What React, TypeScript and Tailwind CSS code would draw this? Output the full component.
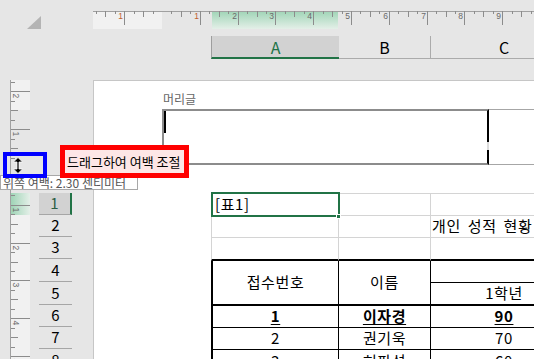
import React from 'react';

const KR = "font-['Noto_Sans_CJK_KR','Noto_Sans',sans-serif]";
const CM = 37.8;

function TopRuler() {
  const w = 441;
  const o = 69;
  const ticks: React.ReactNode[] = [];
  for (let k = -12; k <= 44; k++) {
    if (k === 0) continue;
    const x = Math.round(o + (k * CM) / 4) + 0.5;
    if (x < 0 || x > w) continue;
    const len = k % 4 === 0 ? 14 : k % 2 === 0 ? 6 : 3;
    ticks.push(<line key={k} x1={x} x2={x} y1={0} y2={len} stroke="#8c8c8c" strokeWidth={1} />);
    if (k % 4 === 0) {
      const n = Math.abs(k / 4);
      ticks.push(
        <text key={'t' + k} x={x - 1.5} y={8} textAnchor="end" fontSize="8.5" fontFamily="Liberation Sans, sans-serif" fill={k === -4 || k === 4 ? '#c0622e' : '#6a6a6a'}>
          {n}
        </text>
      );
    }
  }
  return (
    <svg width={w} height={18} className="block shrink-0">
      <defs>
        <linearGradient id="gtop" x1="0" y1="0" x2="0" y2="1">
          <stop offset="0" stopColor="#9fd4b6" />
          <stop offset="1" stopColor="#e4efe8" />
        </linearGradient>
      </defs>
      <rect x={0} y={0} width={69} height={18} fill="#f1f1f1" />
      <rect x={119} y={0} width={126} height={18} fill="url(#gtop)" />
      <line x1={0} x2={w} y1={0.5} y2={0.5} stroke="#a0a0a0" />
      {ticks}
    </svg>
  );
}

function LeftRuler() {
  const h = 279;
  const o = 87;
  const ticks: React.ReactNode[] = [];
  for (let k = -12; k <= 24; k++) {
    if (k === 0) continue;
    const y = Math.round(o + (k * CM) / 4) + 0.5;
    if (y < 0 || y > h) continue;
    const len = k % 4 === 0 ? 19 : k % 2 === 0 ? 7 : 4;
    ticks.push(<line key={k} x1={11} x2={11 + len} y1={y} y2={y} stroke="#8c8c8c" strokeWidth={1} />);
    if (k % 4 === 0) {
      const n = Math.abs(k / 4);
      ticks.push(
        <text key={'t' + k} x={0} y={0} transform={`translate(13 ${y + 2}) rotate(90)`} fontSize="8.5" fontFamily="Liberation Sans, sans-serif" fill="#6a6a6a">
          {n}
        </text>
      );
    }
  }
  return (
    <svg width={39} height={h} className="block shrink-0">
      <defs>
        <linearGradient id="gleft" x1="0" y1="0" x2="1" y2="0">
          <stop offset="0" stopColor="#9fd4b6" />
          <stop offset="1" stopColor="#e4efe8" />
        </linearGradient>
      </defs>
      <rect x={11} y={0} width={19} height={30} fill="#f1f1f1" />
      <rect x={11} y={113} width={19} height={22} fill="url(#gleft)" />
      <rect x={11} y={135} width={19} height={h - 135} fill="#f1f1f1" />
      <line x1={10.5} x2={10.5} y1={0} y2={h} stroke="#a0a0a0" />
      {ticks}
    </svg>
  );
}

const rowHeights = [22, 22, 22, 23, 23, 22, 22, 23];

function RowHeaders() {
  return (
    <div className={`w-[33px] shrink-0 pt-[113px] flex flex-col ${KR}`}>
      {rowHeights.map((h, i) => (
        <div
          key={i}
          style={{ height: h }}
          className={
            i === 0
              ? 'shrink-0 flex items-center justify-center bg-[#d2d2d2] border-b border-[#a6a6a6] border-r-2 border-r-[#217346] text-[15px] text-[#2c5e44]'
              : 'shrink-0 flex items-center justify-center border-b border-[#a6a6a6] text-[15px] text-black'
          }
        >
          {i + 1}
        </div>
      ))}
    </div>
  );
}

const gray = 'border-[#d4d4d4]';

function Sheet() {
  return (
    <div className={`shrink-0 ml-[117px] mt-[28px] grid grid-cols-[128px_92px_146px] grid-rows-[22px_22px_23px_22px_23px_22px_22px_23px] border-t ${gray} text-[15px] tracking-[0.6px] text-black ${KR}`}>
      {/* row 1 */}
      <div className={`relative flex items-center pl-[3px] border-l border-r border-b ${gray}`}>
        [표1]
        <div className="absolute left-[-1px] top-[-2px] right-[-2px] bottom-[-2px] border-2 border-[#217346]" />
        <div className="absolute right-[-3px] bottom-[-4px] w-[5px] h-[5px] bg-[#217346] border border-white" />
      </div>
      <div className={`border-r border-b ${gray}`} />
      <div className={`border-b ${gray}`} />
      {/* row 2 */}
      <div className={`border-l border-r border-b ${gray}`} />
      <div className={`border-r border-b ${gray}`} />
      <div className={`flex items-center pl-[1px] whitespace-nowrap [word-spacing:3px] border-b ${gray}`}>개인 성적 현황</div>
      {/* row 3 */}
      <div className={`border-l border-r ${gray} border-b-2 border-b-black`} />
      <div className={`border-r ${gray} border-b-2 border-b-black`} />
      <div className="border-b-2 border-black" />
      {/* rows 4-5 */}
      <div className="row-span-2 flex items-center justify-center border-l-2 border-r border-b-2 border-black">접수번호</div>
      <div className="row-span-2 flex items-center justify-center border-r border-b-2 border-black">이름</div>
      <div className="border-b border-black" />
      <div className="flex items-center justify-center border-b-2 border-black">1학년</div>
      {/* row 6 */}
      <div className="flex items-center justify-center border-l-2 border-r border-b border-black font-bold underline decoration-double underline-offset-2">1</div>
      <div className="flex items-center justify-center border-r border-b border-black font-bold underline decoration-double underline-offset-2">이자경</div>
      <div className="flex items-center justify-center border-b border-black font-bold underline decoration-double underline-offset-2">90</div>
      {/* row 7 */}
      <div className="flex items-center justify-center border-l-2 border-r border-b border-black">2</div>
      <div className="flex items-center justify-center border-r border-b border-black">권기욱</div>
      <div className="flex items-center justify-center border-b border-black">70</div>
      {/* row 8 */}
      <div className="flex items-center justify-center border-l-2 border-r border-b border-black">3</div>
      <div className="flex items-center justify-center border-r border-b border-black">허판석</div>
      <div className="flex items-center justify-center border-b border-black">60</div>
    </div>
  );
}

export default function App() {
  return (
    <div className="relative w-[534px] h-[359px] overflow-hidden bg-[#e6e6e6] flex flex-col">
      {/* top: ruler + column headers */}
      <div className="h-[80px] shrink-0 pt-[11px] flex flex-col">
        <div className="h-[18px] shrink-0 flex">
          <div className="w-[93px] shrink-0 pl-[27px] pt-[5px]">
            <svg width={14} height={13} className="block">
              <polygon points="0,13 14,0 14,13" fill="#b4b4b4" />
            </svg>
          </div>
          <TopRuler />
        </div>
        <div className={`shrink-0 mt-[7px] h-[23px] pl-[211px] flex text-[16px] ${KR}`}>
          <div className="w-[128px] shrink-0 flex items-center justify-center bg-[#d2d2d2] border-l border-[#9e9e9e] border-b-2 border-b-[#217346] text-[#217346]">
            A
          </div>
          <div className="w-[92px] shrink-0 flex items-center justify-center border-r border-b border-[#ababab] text-black">B</div>
          <div className="w-[146px] shrink-0 flex items-center justify-center border-b border-[#ababab] text-black">C</div>
        </div>
      </div>

      {/* main: left ruler, row headers, page */}
      <div className="flex h-[279px] shrink-0">
        <LeftRuler />
        <RowHeaders />
        <div className="w-[21px] shrink-0" />
        <div className="flex-1 bg-white border-l border-t border-[#c6c6c6] flex flex-col">
          <div className={`shrink-0 h-[28px] pl-[69px] pt-[9px] text-[12px] leading-[17px] text-[#666666] ${KR}`}>머리글</div>
          <div className="shrink-0 h-[56px] pl-[68px] flex">
            <div className="relative w-[327px] shrink-0 border-2 border-[#8c8c8c] border-r-black">
              <div className="absolute left-0 top-0 w-[2px] h-[22px] bg-black" />
              <div className="absolute right-[-2px] top-[31px] w-[2px] h-[8px] bg-[#dcdcdc]" />
            </div>
            <div className="flex-1 border-y border-[#a6a6a6]" />
          </div>
          <Sheet />
        </div>
      </div>

      {/* tooltip */}
      <div className={`absolute left-0 top-[175px] w-[138px] h-[15px] bg-white border border-[#a8a8a8] pl-[2px] text-[12px] leading-[13px] text-[#555555] whitespace-nowrap ${KR}`}>
        위쪽 여백: 2.30 센티미터
      </div>
      {/* red callout */}
      <div className={`absolute left-[60px] top-[145px] w-[129px] h-[33px] border-[5px] border-[#ff0000] bg-[#fde6e6] pl-[2px] flex items-center text-[13px] text-black whitespace-nowrap ${KR}`}>
        드래그하여 여백 조절
      </div>
      {/* blue callout */}
      <div className="absolute left-[3px] top-[152px] w-[44px] h-[26px] border-4 border-[#0000ff]" />
      <svg width={10} height={17} className="absolute left-[13px] top-[157px]">
        <path d="M5 0.5 L9.5 5 L6 5 L6 12 L9.5 12 L5 16.5 L0.5 12 L4 12 L4 5 L0.5 5 Z" fill="black" stroke="white" strokeWidth={0.8} />
      </svg>
    </div>
  );
}
